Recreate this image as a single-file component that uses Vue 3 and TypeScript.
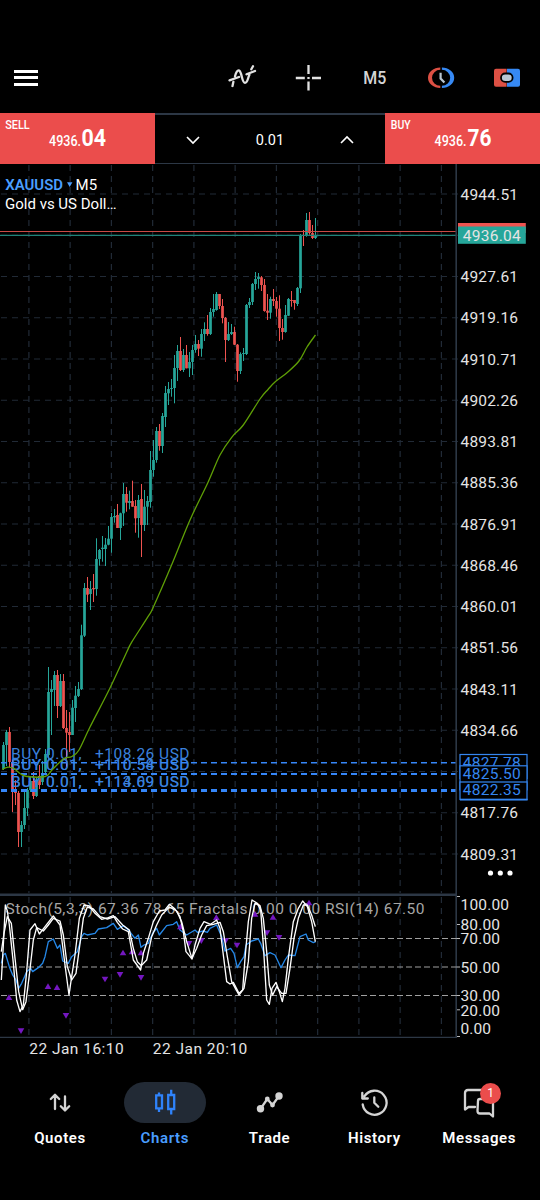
<script setup lang="ts">
type Candle = [up: 0 | 1, high: number, top: number, bottom: number, low: number]
type Point = [number, number]

const FIRST_X = 3.5
const STEP = 3

const candles: Candle[] = [
  [1, 742, 745, 769, 770], [1, 730, 732, 745, 766], [0, 727, 732, 762, 767], [0, 760, 762, 790, 812],
  [0, 780, 790, 793, 805], [0, 791, 793, 832, 847], [1, 821, 825, 832, 847], [1, 790, 808, 825, 829],
  [1, 788, 790, 808, 816], [1, 777, 781, 790, 792], [0, 772, 781, 796, 799], [1, 777, 780, 796, 797],
  [0, 765, 776, 785, 789], [1, 761, 773, 782, 785], [1, 749, 754, 772, 773], [1, 667, 692, 755, 760],
  [1, 680, 689, 692, 735], [1, 671, 675, 690, 706], [0, 670, 675, 706, 718], [1, 674, 681, 706, 707],
  [0, 674, 681, 728, 729], [0, 710, 728, 732.7, 766.7], [0, 712, 732, 735, 752], [1, 700, 707.7, 735, 735],
  [1, 686, 695.7, 708, 722], [1, 682, 689, 696, 697], [1, 624.7, 635.3, 689, 690], [1, 583, 588, 635.7, 637],
  [0, 577, 588, 594.7, 602], [1, 581, 589, 594, 610], [0, 574, 588, 589.3, 602], [1, 538.3, 559, 589, 595.7],
  [1, 549, 550, 559, 565.7], [1, 536, 547.7, 549, 561.7], [1, 538, 544.7, 549, 566], [1, 526, 538.7, 544.7, 545.3],
  [1, 513, 517, 538.7, 552.7], [1, 509, 516, 517.3, 522.7], [0, 504, 515, 528, 528], [1, 512.7, 513.3, 528, 540],
  [1, 483, 494, 513.3, 526], [0, 487, 494, 502.7, 511.7], [1, 490.7, 501, 503, 509.3], [0, 480.7, 501, 506.7, 506.7],
  [0, 500, 506, 518.3, 532.7], [1, 495, 500, 518, 537.7], [0, 484, 499, 525, 557], [1, 490, 506.7, 525, 531],
  [1, 496, 501, 506.7, 525], [1, 451, 470, 502, 507.7], [1, 440, 460, 470, 476.7], [1, 427, 431, 460, 462.7],
  [0, 424, 431, 446, 450.7], [1, 413, 416, 446, 453], [1, 386, 393, 417, 427], [1, 382, 389, 393.3, 405],
  [1, 379, 388, 389, 396.7], [1, 355, 368, 388, 403.3], [1, 345, 351, 368, 381], [0, 337, 351, 370, 371],
  [1, 349, 355, 370, 372], [0, 345, 355, 368.3, 368.3], [1, 352, 362, 368.3, 377], [1, 345, 350, 362, 375],
  [1, 335, 344, 350, 352.7], [0, 340, 344, 348.7, 356], [1, 329, 334, 348.7, 356.7], [1, 322.3, 329, 334, 341],
  [0, 315, 329, 334, 335.7], [1, 308, 312, 334, 335], [1, 294, 309, 312, 316.7], [1, 292, 294, 310, 310.7],
  [0, 294, 294, 306, 309], [0, 299, 306, 318, 323.3], [0, 317, 318, 340, 362], [1, 322, 334, 340, 341],
  [1, 324, 332, 334, 335], [0, 326.7, 332, 344.7, 345], [0, 344, 344.7, 371, 381.7], [1, 352.3, 354, 371, 374],
  [1, 348, 353, 354, 361], [1, 304, 305, 354, 355], [1, 298, 302, 305, 308], [1, 283, 284, 302, 305],
  [1, 272, 279, 284, 290], [1, 273, 277, 279, 288.7], [0, 276, 277.3, 285, 291], [0, 279, 285, 311, 311.7],
  [0, 294, 310.7, 312.7, 320], [1, 296.7, 299, 312.7, 318.7], [0, 289, 299, 301, 306], [0, 297, 301, 308.7, 316.7],
  [0, 295.3, 308.7, 328, 341], [0, 319, 328, 332, 339.7], [1, 305, 315, 332, 332.7], [1, 298, 299, 315.7, 316],
  [0, 291, 300, 301, 306.7], [0, 300, 300, 303, 309.7], [1, 287, 288, 304, 306], [1, 234, 235, 288.3, 293],
  [0, 230, 235, 236, 246], [1, 213, 220, 236, 236.7], [0, 212, 220, 233, 234.7], [0, 225, 233, 238, 239],
  [1, 218, 235, 238, 239],
]

const movingAverage: Point[] = [
  [2, 769.5], [8, 767.2], [14, 768.7], [20, 773.5], [27, 776.5], [45, 776.5], [52, 770], [60, 762], [65, 758],
  [72, 756.5], [79, 750], [90, 727], [110, 688], [127, 651.5], [132, 641.7], [148, 616.7], [153.5, 606.7],
  [172, 564], [190, 520], [208.3, 481.7], [220, 455], [231.7, 437.3], [243.3, 425], [260, 399], [268, 389.5],
  [275, 382], [287, 372.7], [299, 361], [307, 347], [315.5, 335],
]

/* Oscillator samples use a 3x canvas whose origin is the top of the indicator pane. */
const stochMain: Point[] = [
  [4, 285], [10, 180], [16, 60], [22, 78], [28, 120], [40, 235], [50, 345], [60, 380], [70, 360], [80, 260],
  [90, 135], [105, 116], [118, 147], [135, 125], [160, 93], [180, 120], [195, 240], [207, 330], [215, 275],
  [225, 210], [238, 100], [252, 60], [268, 63], [285, 85], [305, 103], [325, 98], [340, 92], [352, 112],
  [368, 132], [385, 140], [400, 225], [422, 255], [430, 205], [445, 160], [460, 110], [478, 78], [495, 75],
  [508, 58], [525, 72], [540, 95], [550, 140], [558, 200], [568, 212], [576, 222], [585, 180], [600, 130],
  [612, 110], [632, 118], [650, 105], [660, 130], [670, 210], [680, 290], [690, 297], [700, 292], [717, 325],
  [728, 315], [735, 220], [745, 110], [756, 45], [772, 55], [782, 75], [790, 180], [800, 345], [808, 358],
  [816, 310], [828, 292], [838, 320], [847, 350], [855, 310], [865, 220], [880, 110], [895, 70], [908, 48],
  [922, 65], [935, 110], [946, 170],
]
const stochSignal: Point[] = [
  [4, 200], [12, 145], [22, 95], [34, 115], [44, 210], [56, 320], [68, 374], [78, 350], [88, 270], [100, 165],
  [110, 128], [130, 138], [145, 120], [160, 100], [180, 108], [190, 150], [202, 245], [215, 285], [228, 265],
  [238, 190], [250, 100], [262, 66], [280, 72], [300, 95], [322, 102], [345, 95], [368, 120], [388, 135],
  [400, 190], [412, 230], [424, 242], [440, 225], [455, 155], [470, 120], [485, 90], [508, 66], [530, 78],
  [545, 110], [560, 170], [576, 220], [590, 190], [605, 150], [620, 122], [640, 118], [660, 112], [670, 140],
  [682, 215], [695, 290], [717, 330], [732, 310], [745, 230], [755, 100], [765, 55], [780, 62], [790, 100],
  [800, 200], [808, 300], [818, 330], [830, 305], [845, 325], [858, 325], [870, 250], [882, 160], [895, 100],
  [910, 60], [922, 60], [935, 90], [946, 125],
]
const rsi: Point[] = [
  [4, 235], [10, 210], [16, 205], [28, 245], [38, 270], [48, 285], [56, 310], [65, 295], [80, 260], [92, 250],
  [98, 260], [115, 248], [128, 235], [135, 215], [145, 170], [160, 162], [172, 190], [180, 180], [188, 228],
  [205, 235], [215, 215], [232, 200], [245, 155], [252, 145], [262, 150], [285, 145], [295, 132], [320, 128],
  [340, 115], [352, 133], [370, 122], [385, 135], [405, 160], [415, 150], [423, 187], [432, 180], [445, 175],
  [458, 145], [470, 130], [478, 150], [500, 122], [520, 118], [530, 110], [540, 135], [560, 150], [585, 135],
  [592, 142], [610, 138], [622, 142], [630, 130], [650, 120], [665, 155], [675, 198], [692, 190], [702, 205],
  [712, 248], [722, 230], [732, 215], [738, 180], [755, 168], [775, 162], [782, 175], [795, 212], [810, 203],
  [825, 210], [843, 248], [855, 225], [865, 210], [885, 212], [900, 155], [918, 147], [925, 165], [940, 173],
  [947, 170],
]
const fractalsUp: Point[] = [
  [27, 337], [144, 304], [171, 307], [369, 203], [396, 200], [423, 203], [541, 125], [649, 97], [765, 87],
  [819, 96], [927, 53],
]
const fractalsDown: Point[] = [
  [63, 438], [198, 392], [315, 283], [360, 269], [423, 278], [567, 176], [604, 168], [677, 168], [711, 181],
  [801, 144], [837, 158],
]

const verticals = Array.from({ length: 11 }, (_, i) => 28.9 + i * 41.25)
const rows = Array.from({ length: 17 }, (_, i) => 194 + i * 41.25)
const priceLabels = [
  '4944.51', '', '4927.61', '4919.16', '4910.71', '4902.26', '4893.81', '4885.36', '4876.91', '4868.46',
  '4860.01', '4851.56', '4843.11', '4834.66', '', '4817.76', '4809.31',
]
const positions = [
  { profit: '+108.26 USD', textY: 758.5 },
  { profit: '+110.54 USD', textY: 769.5 },
  { profit: '+110.58 USD', textY: 769.5 },
  { profit: '+113.69 USD', textY: 786.5 },
  { profit: '+114.09 USD', textY: 786.5 },
]
const orderLines = [
  { y: 762.7, w: 1.4 },
  { y: 774, w: 2 },
  { y: 790.5, w: 2.8 },
]
const orderTags = [
  { y: 754.5, h: 24, label: '4827.78' },
  { y: 765.8, h: 24, label: '4825.50' },
  { y: 782, h: 17.5, label: '4822.35' },
]
const levels = [938.5, 967, 995.5]
const scale = [
  { label: '100.00', y: 910, w: 48.5 },
  { label: '80.00', y: 930, w: 39.5 },
  { label: '70.00', y: 944.3, w: 39.5 },
  { label: '50.00', y: 973, w: 39.5 },
  { label: '30.00', y: 1001.3, w: 39.5 },
  { label: '20.00', y: 1015.5, w: 39.5 },
  { label: '0.00', y: 1034, w: 30.5 },
]
const ticks = [896.5, 924.5, 938.5, 967, 995.5, 1009.8, 1036.5]
const points = (p: Point[]) => p.map((v) => v.join(',')).join(' ')
const x = (i: number) => FIRST_X + i * STEP

/* Catmull-Rom spline through the samples, written as cubic segments. */
function smooth(p: Point[]): string {
  let d = `M${p[0][0]} ${p[0][1]}`
  for (let i = 0; i < p.length - 1; i++) {
    const a = p[Math.max(0, i - 1)]
    const b = p[i]
    const c = p[i + 1]
    const e = p[Math.min(p.length - 1, i + 2)]
    d += `C${b[0] + (c[0] - a[0]) / 6} ${b[1] + (c[1] - a[1]) / 6} ${c[0] - (e[0] - b[0]) / 6} ${c[1] - (e[1] - b[1]) / 6} ${c[0]} ${c[1]}`
  }
  return d
}
</script>

<template>
  <main class="screen">
    <header class="toolbar">
      <button class="menu" aria-label="Menu"><i /><i /><i /></button>
      <nav class="tools">
        <svg width="30" height="30" viewBox="0 0 30 30" class="line-icon">
          <path d="M2.500 17.300 12 14M19.500 11.300 28 8M5.500 23 6.400 18.800M8 13.300C9 9.500 10.500 6.800 12.200 7.600C15 9 14.800 19.800 18 19.800C20.800 19.800 21 14 22.400 11.800M24.300 6.300 26 3.300" />
        </svg>
        <svg width="30" height="30" viewBox="0 0 30 30" class="line-icon">
          <path d="M15.500 2v9M15.500 18.500v9M2.800 15h9M19 15h9M15.500 14v2" stroke-linecap="butt" />
        </svg>
        <svg width="30" height="30" viewBox="0 0 30 30" class="tf">
          <text x="3.300" y="21.200" textLength="23" lengthAdjust="spacingAndGlyphs">M5</text>
        </svg>
        <svg width="30" height="30" viewBox="0 0 30 30">
          <path d="M14.300 4.500A12.300 10.300 0 0 0 14.300 25.100V22.800A8.300 8 0 0 1 14.300 6.800Z" fill="#dd5044" />
          <path d="M15.900 4.500A12.300 10.300 0 0 1 15.900 25.100V22.800A8.300 8 0 0 0 15.900 6.800Z" fill="#3689f4" />
          <path d="M14.600 9.800v5.700l3.800 4" fill="none" stroke="#b9c6d2" stroke-width="2.200" />
        </svg>
        <svg width="30" height="30" viewBox="0 0 30 30">
          <path d="M14.600 5.700H4a2 2 0 0 0-2 2v14a2 2 0 0 0 2 2h10.600z" fill="#dd5044" />
          <path d="M15 5.700h11a2 2 0 0 1 2 2v14a2 2 0 0 1-2 2H15z" fill="#3689f4" />
          <rect x="9" y="10.500" width="11.600" height="8.400" rx="4.200" fill="#b9c6d2" stroke="#000" stroke-width="1.800" />
        </svg>
      </nav>
    </header>

    <section class="deal">
      <button class="price">
        <svg width="154" height="51" viewBox="0 0 154 51">
          <text x="5.200" y="16" font-size="13.200" textLength="24.500" lengthAdjust="spacingAndGlyphs">SELL</text>
          <text x="49" y="33" font-size="15.500" textLength="32" lengthAdjust="spacingAndGlyphs">4936.</text>
          <text x="81.500" y="33" font-size="24" font-weight="700" textLength="24.500" lengthAdjust="spacingAndGlyphs">04</text>
        </svg>
      </button>
      <div class="volume">
        <svg width="16" height="10" viewBox="0 0 16 10"><path d="M2 2l6 6 6-6" /></svg>
        <span>0.01</span>
        <svg width="16" height="10" viewBox="0 0 16 10"><path d="M2 8l6-6 6 6" /></svg>
      </div>
      <button class="price">
        <svg width="154" height="51" viewBox="0 0 154 51">
          <text x="5.800" y="16" font-size="13.200" textLength="19.800" lengthAdjust="spacingAndGlyphs">BUY</text>
          <text x="49.500" y="33" font-size="15.500" textLength="32" lengthAdjust="spacingAndGlyphs">4936.</text>
          <text x="82.500" y="33" font-size="24" font-weight="700" textLength="24" lengthAdjust="spacingAndGlyphs">76</text>
        </svg>
      </button>
    </section>

    <svg class="chart" width="540" height="904" viewBox="0 164 540 904">
      <g class="grid">
        <line v-for="v in verticals" :key="'v' + v" :x1="v" :x2="v" y1="165" y2="893" />
        <line v-for="v in verticals" :key="'w' + v" :x1="v" :x2="v" y1="897" y2="1036" />
        <line v-for="r in rows" :key="r" x1="1" x2="459" :y1="r" :y2="r" />
      </g>

      <text class="symbol" x="5.200" y="189.800" textLength="57.800" lengthAdjust="spacingAndGlyphs">XAUUSD</text>
      <path d="M67 182.300h5.400l-2.700 4.800z" fill="#4a9eff" />
      <text class="title" x="75.600" y="189.800" textLength="21.500" lengthAdjust="spacingAndGlyphs">M5</text>
      <text class="title" x="5" y="208.500" textLength="111.500" lengthAdjust="spacingAndGlyphs">Gold vs US Doll…</text>

      <g v-for="(c, i) in candles" :key="i" :class="c[0] ? 'up' : 'down'">
        <rect :x="x(i) - 0.5" :y="c[1]" width="1" :height="c[4] - c[1]" />
        <rect :x="x(i) - 1.35" :y="c[2]" width="2.7" :height="Math.max(1, c[3] - c[2])" />
      </g>

      <g class="order-text">
        <g v-for="p in positions" :key="p.profit">
          <text x="11" :y="p.textY" textLength="70.500">BUY 0.01,</text>
          <text x="95" :y="p.textY" textLength="94.500">{{ p.profit }}</text>
        </g>
      </g>
      <line v-for="o in orderLines" :key="o.y" class="order" x1="1" x2="456" :y1="o.y" :y2="o.y" :stroke-width="o.w" />
      <path :d="smooth(movingAverage)" fill="none" stroke="#5f9f06" stroke-width="1.300" />

      <path d="M0 231.500H456" stroke="#c94a46" stroke-width="1.200" />
      <path d="M0 235.300H456" stroke="#1f8279" stroke-width="1.200" />
      <path d="M456.200 164V1037" stroke="#2c3745" stroke-width="1.600" />
      <path d="M0 894.800H456" stroke="#2c3745" stroke-width="2.600" />
      <path d="M0 1037.300H457" stroke="#2c3745" stroke-width="1.300" />

      <g class="axis">
        <template v-for="(label, i) in priceLabels" :key="i">
          <text v-if="label" x="460.500" :y="rows[i] + 5.500" textLength="57.500">{{ label }}</text>
        </template>
        <text v-for="s in scale" :key="s.label" x="460.500" :y="s.y" :textLength="s.w">{{ s.label }}</text>
        <text x="29.200" y="1054.400" textLength="94.500">22 Jan 16:10</text>
        <text x="152.800" y="1054.400" textLength="94.500">22 Jan 20:10</text>
      </g>
      <path v-for="t in ticks" :key="t" :d="`M457 ${t}h3`" stroke="#bbb" />

      <rect x="458" y="223" width="67.800" height="10" fill="#ef5350" />
      <rect x="458" y="226.500" width="67.800" height="17.300" fill="#26a69a" />
      <text class="axis" x="462.700" y="240.900" textLength="58">4936.04</text>

      <g v-for="t in orderTags" :key="t.label">
        <rect x="460" :y="t.y" width="67" :height="t.h" fill="#000" stroke="#3586f0" stroke-width="1.200" />
        <text class="tag" x="462.700" :y="t.y + 13.400" textLength="58">{{ t.label }}</text>
      </g>
      <path d="M460 799.600H527.600" stroke="#3586f0" stroke-width="1.800" />
      <g fill="#fff">
        <circle cx="490.500" cy="873" r="2.600" /><circle cx="500.300" cy="873" r="2.600" /><circle cx="510" cy="873" r="2.600" />
      </g>

      <text class="indicator" x="5.500" y="914.400" textLength="419">Stoch(5,3,3) 67.36 78.65 Fractals 0.00 0.00 RSI(14) 67.50</text>
      <line v-for="l in levels" :key="l" class="level" x1="1" x2="459" :y1="l" :y2="l" />
      <g transform="translate(0 885) scale(0.33333)" fill="none" stroke-linejoin="round">
        <polyline :points="points(rsi)" stroke="#2588e8" stroke-width="4" />
        <path v-for="f in fractalsUp" :key="'u' + f[0]" :d="`M${f[0] - 10} ${f[1] + 8}h20l-10 -17z`" fill="#7417c0" />
        <path v-for="f in fractalsDown" :key="'d' + f[0]" :d="`M${f[0] - 10} ${f[1] - 8}h20l-10 17z`" fill="#7417c0" />
        <polyline :points="points(stochMain)" stroke="#fff" stroke-width="4" />
        <polyline :points="points(stochSignal)" stroke="#fff" stroke-width="4" />
      </g>
    </svg>

    <nav class="tabs">
      <a class="tab">
        <span class="pill">
          <svg width="30" height="30" viewBox="0 0 30 30" class="tab-icon">
            <path d="M10 21V7M5.800 11 10 6.800l4.200 4.200M20 8.500v14M15.800 18.300 20 22.500l4.200-4.200" />
          </svg>
        </span>
        Quotes
      </a>
      <a class="tab active">
        <span class="pill">
          <svg width="30" height="30" viewBox="0 0 30 30" class="tab-icon candle-icon">
            <path d="M9 4.500v3M9 20.500v3.500M6.200 7.300H12v13H6.200zM21.200 1.700v5M21.200 21.500v5M18.200 7h6v14h-6z" />
          </svg>
        </span>
        Charts
      </a>
      <a class="tab">
        <span class="pill">
          <svg width="30" height="30" viewBox="0 0 30 30" class="tab-icon">
            <path d="M5.500 20.800 12.300 11 17.500 17 24 8" />
            <g fill="#d4d4d4" stroke="none"><circle cx="5.500" cy="20.800" r="3.700" /><circle cx="12.300" cy="11" r="2.400" /><circle cx="17.500" cy="17" r="2.400" /><circle cx="24" cy="8" r="3.700" /></g>
          </svg>
        </span>
        Trade
      </a>
      <a class="tab">
        <span class="pill">
          <svg width="30" height="30" viewBox="0 0 30 30" class="tab-icon">
            <path d="M3.700 16.500A12 12 0 1 0 5.500 8.200M3.300 5v5.500h5.500M15.300 9.500v5.300l4 4" />
          </svg>
        </span>
        History
      </a>
      <a class="tab">
        <span class="pill">
          <svg width="34" height="32" viewBox="0 0 34 32" class="tab-icon">
            <path d="M28 9V5.500q0-2.500-2.500-2.500H6q-3 0-3 3v16.500l3.500-2.500H13M16 14q0-2 2-2h10q3 0 3 3V29.500l-3.500-3H18q-2.500 0-2.500-2.500z" />
          </svg>
          <b class="badge">1</b>
        </span>
        Messages
      </a>
    </nav>
  </main>
</template>

<style>
body { background: #000; }
</style>

<style scoped>
.screen {
  width: 540px;
  height: 1200px;
  background: #000;
  color: #fff;
  font-family: Roboto, "Noto Sans", sans-serif;
  overflow: hidden;
}
svg { display: block; flex: none; }
button { border: 0; padding: 0; background: none; color: inherit; font: inherit; }
.toolbar {
  box-sizing: border-box;
  height: 113px;
  padding: 42px 18px 0 14px;
  display: flex;
  align-items: center;
  justify-content: space-between;
}
.menu { display: flex; flex-direction: column; gap: 3.5px; }
.menu i { width: 24px; height: 3px; background: #fff; }
.tools { display: flex; gap: 36.2px; }
.line-icon { fill: none; stroke: #e2e2e2; stroke-width: 2.3; stroke-linecap: round; }
.tf { fill: #d5d5d5; font-size: 18px; font-weight: 500; }
.deal { display: flex; height: 51px; }
.price { width: 155px; background: #eb4d4c; overflow: hidden; }
.price text { fill: #fff; font-weight: 500; }
.price text[font-weight="700"] { font-weight: 700; }
.volume {
  box-sizing: border-box;
  width: 231px;
  padding: 2px 30px 0;
  display: flex;
  align-items: center;
  justify-content: space-between;
  border-top: 2px solid #2c3745;
  border-bottom: 1px solid #2c3745;
  font-size: 14.5px;
}
.volume path { fill: none; stroke: #fff; stroke-width: 1.6; }
.grid line { stroke: #212a36; stroke-width: 1.2; stroke-dasharray: 6 5; }
.symbol { fill: #4a9eff; font-size: 15.5px; font-weight: 600; }
.title { fill: #fff; font-size: 15.5px; }
.up { fill: #26a69a; }
.down { fill: #ef5350; }
.order-text { fill: #3a80dc; font-size: 15.5px; }
.order { stroke: #3586f8; stroke-dasharray: 6 4; }
.axis { fill: #e4e4e4; font-size: 15.5px; }
.tag { fill: #3586f0; font-size: 15.5px; }
.indicator { fill: #a6a6a6; font-size: 15.5px; }
.level { stroke: #a0a0a0; stroke-width: 1; stroke-dasharray: 6 3; }
.tabs { display: flex; padding: 14px 7px 0 7.6px; }
.tab {
  width: 104.8px;
  display: flex;
  flex: none;
  flex-direction: column;
  align-items: center;
  gap: 6px;
  font-size: 15px;
  font-weight: 600;
  letter-spacing: 0.6px;
  line-height: 18px;
}
.pill {
  position: relative;
  width: 82px;
  height: 41px;
  display: flex;
  align-items: center;
  justify-content: center;
  border-radius: 21px;
}
.active { color: #4a9eff; }
.active .pill { background: #222a35; }
.tab-icon { fill: none; stroke: #d4d4d4; stroke-width: 2.3; stroke-linecap: round; stroke-linejoin: round; }
.candle-icon { stroke: #2f83fb; stroke-linecap: butt; stroke-linejoin: miter; }
.badge {
  position: absolute;
  left: 42px;
  top: 0.5px;
  width: 21px;
  height: 21px;
  border-radius: 50%;
  background: #eb4d4c;
  color: #fff;
  font-size: 12px;
  font-weight: 400;
  letter-spacing: 0;
  line-height: 21px;
  text-align: center;
}
</style>
